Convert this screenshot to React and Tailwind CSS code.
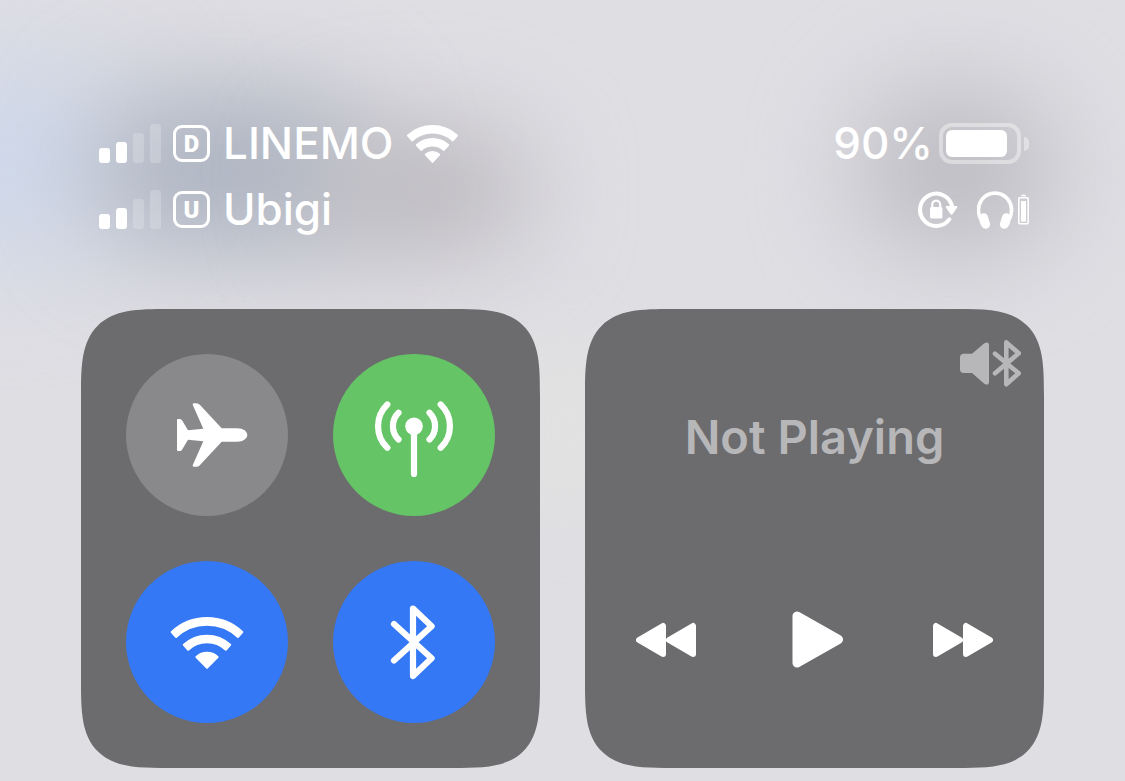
const SIGNAL_BARS = [
  'h-[15px] bg-white',
  'h-[21px] bg-white',
  'h-[30px] bg-white/20',
  'h-[39px] bg-white/20',
];

const CARD =
  'aspect-square rounded-[60px] bg-[#6c6c6e] supports-[corner-shape:squircle]:rounded-[87px] supports-[corner-shape:squircle]:[corner-shape:superellipse(1.7)]';

function SignalBars() {
  return (
    <div className="flex items-end gap-[6px]" role="img" aria-label="Signal strength 2 of 4">
      {SIGNAL_BARS.map((bar, index) => (
        <span key={index} className={`w-[11px] rounded-[3px] ${bar}`} />
      ))}
    </div>
  );
}

function Carrier({ sim, name, children }) {
  return (
    <div className="flex h-[41px] items-center">
      <SignalBars />
      <span className="ml-3 flex size-[37px] items-center justify-center rounded-[9px] border-[3px] border-white font-[Roboto,sans-serif] text-[24px] leading-none font-black">
        {sim}
      </span>
      <span className="mr-[13px] ml-[13px] pb-[2px] text-[44px] leading-none font-medium whitespace-nowrap">{name}</span>
      {children}
    </div>
  );
}

function StatusWifiIcon() {
  return (
    <svg width="51" height="38" viewBox="0 0 51 38" fill="currentColor" stroke="currentColor" strokeWidth="2" strokeLinejoin="round" aria-hidden="true">
      <path d="M1 10.5A36.7 36.7 0 0 1 50 10.5L45.8 15.4A30.2 30.2 0 0 0 5.2 15.4Z" />
      <path d="M9.8 20A23.8 23.8 0 0 1 41.2 20L36.8 24.9A17 17 0 0 0 14.2 24.9Z" />
      <path d="M18.8 29.6A10 10 0 0 1 32.2 29.6L25.5 36.7Z" />
    </svg>
  );
}

function Battery() {
  return (
    <div className="ml-[6px] flex items-center gap-[3px]" role="img" aria-label="Battery 90 percent">
      <div className="h-[41px] w-[82px] rounded-[13px] border-4 border-white/40 p-[3px]">
        <div className="h-full w-[61px] rounded-[6px] bg-white" />
      </div>
      <div className="h-[14px] w-[5px] rounded-r-full bg-white/40" />
    </div>
  );
}

function RotationLockIcon() {
  return (
    <svg width="40" height="38" viewBox="0 0 40 38" fill="none" stroke="currentColor" aria-label="Rotation locked" role="img">
      <path d="M31.3 28.4A16.2 16.2 0 1 1 34.2 16" strokeWidth="4" strokeLinecap="round" />
      <path d="M28.6 16H38.4L33.7 22.8Z" fill="currentColor" strokeWidth="2" strokeLinejoin="round" />
      <path d="M14.2 18V13.8A4 4.2 0 0 1 22.2 13.8V18" strokeWidth="2.2" />
      <rect x="12" y="16" width="12.4" height="11.4" rx="1.5" fill="currentColor" stroke="none" />
    </svg>
  );
}

function HeadphonesIcon() {
  return (
    <svg width="52" height="38" viewBox="0 0 52 38" fill="none" stroke="currentColor" aria-label="Headphones connected" role="img">
      <path d="M3.6 28C.4 21 1.2 13.6 5 8.4C11.5 0 24.5 0 31 8.4C34.8 13.6 35.6 21 32.4 28" strokeWidth="3.6" />
      <path d="M3.4 24C5 21.2 9.6 21.6 10.6 24.8L13 32.5C14 37.4 7.8 39.6 5 35.8C2.2 32 1.6 27.4 3.4 24Z" fill="currentColor" stroke="none" />
      <path d="M32.6 24C31 21.2 26.4 21.6 25.4 24.8L23 32.5C22 37.4 28.2 39.6 31 35.8C33.8 32 34.4 27.4 32.6 24Z" fill="currentColor" stroke="none" />
      <rect x="41.8" y="6.8" width="9.4" height="26" rx="1" strokeWidth="1.6" />
      <rect x="44" y="10" width="5" height="20.6" fill="currentColor" stroke="none" />
      <path d="M43.6 5.2A3 2.4 0 0 1 49.4 5.2Z" fill="currentColor" stroke="none" />
    </svg>
  );
}

function AirplaneIcon() {
  return (
    <svg className="size-full" viewBox="0 0 162 162" fill="currentColor" aria-hidden="true">
      <path d="M51 66Q51 65 52 65H54Q55.3 65 56.2 66.5L62 76.3L77.3 74.7L66.8 51Q66 49.2 68 49.2H70.5Q72.3 49.2 73.8 50.8L95.7 74.3H111C117.5 74.3 121.3 77.6 121.3 81C121.3 84.4 117.5 87.7 111 87.7H95.7L73.8 111.2Q72.3 112.8 70.5 112.8H68Q66 112.8 66.8 111L77.3 87.3L62 85.7L56.2 95.5Q55.3 97 54 97H52Q51 97 51 96Z" />
    </svg>
  );
}

function AntennaIcon() {
  return (
    <svg className="size-full" viewBox="0 0 162 162" fill="none" stroke="currentColor" strokeWidth="6.2" strokeLinecap="round" aria-hidden="true">
      <circle cx="81" cy="72.3" r="8.8" fill="currentColor" stroke="none" />
      <path d="M81 74V120" />
      <path d="M65.5 58.8A18.8 18.8 0 0 0 65.5 85.5M96.5 58.8A18.8 18.8 0 0 1 96.5 85.5" />
      <path d="M54.3 50.5A30 30 0 0 0 54.3 93.8M107.7 50.5A30 30 0 0 1 107.7 93.8" />
    </svg>
  );
}

function WifiIcon() {
  return (
    <svg className="size-full" viewBox="0 0 162 162" fill="currentColor" stroke="currentColor" strokeWidth="2" strokeLinejoin="round" aria-hidden="true">
      <path d="M45.7 71A51.6 51.6 0 0 1 116.3 71L111.9 76A45 45 0 0 0 50.1 76Z" />
      <path d="M57.8 83.8A34.2 34.2 0 0 1 104.2 83.8L99.8 88.8A27.4 27.4 0 0 0 62.2 88.8Z" />
      <path d="M70.4 96A15.6 15.6 0 0 1 91.6 96L81 106.8Z" />
    </svg>
  );
}

function BluetoothIcon() {
  return (
    <svg className="size-full" viewBox="0 0 162 162" fill="none" stroke="currentColor" strokeWidth="6.2" strokeLinecap="round" strokeLinejoin="round" aria-hidden="true">
      <path d="M61 63L98.6 97.3L80 115V47.6L98.6 65.3L61 99.5" />
    </svg>
  );
}

function SpeakerBluetoothIcon() {
  return (
    <svg width="61" height="47" viewBox="0 0 61 47" fill="none" stroke="currentColor" strokeLinecap="round" strokeLinejoin="round" aria-hidden="true">
      <path d="M0 17.5Q0 13.7 3.8 13.7H12L24 3.6Q29 .5 29 5.5V41.5Q29 46.5 24 43.4L12 33H3.8Q0 33 0 29.2Z" fill="currentColor" stroke="none" />
      <path d="M35 13.7L58.7 33.3L46.3 44.3V2.4L58.7 13.3L35 33.3" strokeWidth="4.6" />
    </svg>
  );
}

function RewindIcon() {
  return (
    <svg width="60" height="36" viewBox="0 0 60 36" fill="currentColor" stroke="currentColor" strokeWidth="6" strokeLinejoin="round" aria-hidden="true">
      <path d="M3 18L27 4V32ZM33 18L57 4V32Z" />
    </svg>
  );
}

function PlayIcon() {
  return (
    <svg width="56" height="57" viewBox="0 0 56 57" fill="currentColor" stroke="currentColor" strokeWidth="9" strokeLinejoin="round" aria-hidden="true">
      <path d="M10 5V52L51.5 28.5Z" />
    </svg>
  );
}

function ForwardIcon() {
  return (
    <svg width="60" height="36" viewBox="0 0 60 36" fill="currentColor" stroke="currentColor" strokeWidth="6" strokeLinejoin="round" aria-hidden="true">
      <path d="M3 4V32L27 18ZM33 4V32L57 18Z" />
    </svg>
  );
}

const toggles = [
  { label: 'Airplane Mode', color: 'bg-[#89898b]', on: false, Icon: AirplaneIcon },
  { label: 'Cellular Data', color: 'bg-[#65c466]', on: true, Icon: AntennaIcon },
  { label: 'Wi-Fi', color: 'bg-[#3478f6]', on: true, Icon: WifiIcon },
  { label: 'Bluetooth', color: 'bg-[#3478f6]', on: true, Icon: BluetoothIcon },
];

function Wallpaper() {
  return (
    <div className="absolute inset-0 -z-10 bg-[#dfdee3]" aria-hidden="true">
      <div className="absolute top-[60px] -left-[120px] h-[200px] w-[260px] rounded-full bg-[#ced8ea] blur-[60px]" />
      <div className="absolute top-[90px] left-[90px] h-[160px] w-[280px] rounded-full bg-[#aeb5c2] blur-[50px]" />
      <div className="absolute top-[130px] left-[310px] h-[120px] w-[220px] rounded-full bg-[#bbb9be] blur-[50px]" />
      <div className="absolute top-[90px] right-[70px] h-[160px] w-[200px] rounded-full bg-[#bdbcc2] blur-[50px]" />
      <div className="absolute top-[340px] left-[45%] h-[180px] w-[120px] rounded-full bg-[#e2e2e1] blur-[40px]" />
    </div>
  );
}

function StatusBar() {
  return (
    <header className="flex justify-between pr-[15px] pl-[18px]">
      <div className="flex flex-col gap-[25px]">
        <Carrier sim="D" name="LINEMO">
          <StatusWifiIcon />
        </Carrier>
        <Carrier sim="U" name="Ubigi" />
      </div>
      <div className="flex flex-col items-end gap-[25px]">
        <div className="flex h-[41px] items-center">
          <span className="pb-[2px] text-[44px] leading-none font-medium">90%</span>
          <Battery />
        </div>
        <div className="flex h-[41px] items-center gap-[19px]">
          <RotationLockIcon />
          <HeadphonesIcon />
        </div>
      </div>
    </header>
  );
}

function Connectivity() {
  return (
    <section className={`${CARD} grid grid-cols-2 gap-[45px] p-[45px]`} aria-label="Connectivity">
      {toggles.map(({ label, color, on, Icon }) => (
        <button key={label} type="button" aria-label={label} aria-pressed={on} className={`aspect-square rounded-full ${color}`}>
          <Icon />
        </button>
      ))}
    </section>
  );
}

function NowPlaying() {
  return (
    <section className={`${CARD} flex flex-col pt-[31px] pb-[100px]`} aria-label="Now playing">
      <button type="button" aria-label="Audio output" className="mr-[23px] self-end text-[#b7b7b9]">
        <SpeakerBluetoothIcon />
      </button>
      <h2 className="mt-[22px] text-center text-[47px] leading-[56px] font-semibold text-[#b7b7b9]">Not Playing</h2>
      <div className="mt-auto flex items-center justify-between px-[51px]">
        <button type="button" aria-label="Rewind">
          <RewindIcon />
        </button>
        <button type="button" aria-label="Play">
          <PlayIcon />
        </button>
        <button type="button" aria-label="Fast forward">
          <ForwardIcon />
        </button>
      </div>
    </section>
  );
}

export default function App() {
  return (
    <div className="relative isolate min-h-screen overflow-hidden px-[81px] pt-[123px] pb-[13px] font-[Inter,sans-serif] text-white">
      <Wallpaper />
      <StatusBar />
      <main className="mt-[79px] grid grid-cols-2 gap-[45px]">
        <Connectivity />
        <NowPlaying />
      </main>
    </div>
  );
}
